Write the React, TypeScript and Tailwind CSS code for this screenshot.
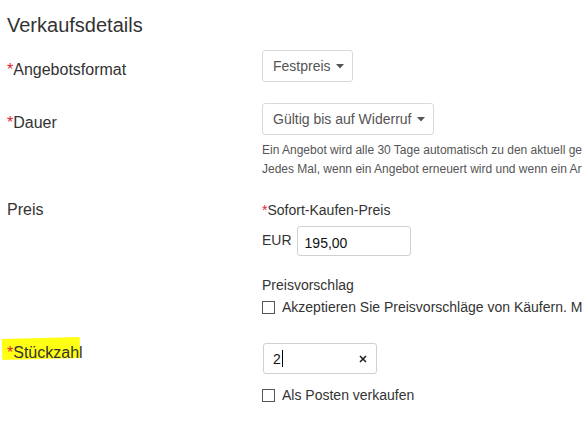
import React from 'react'

// Verkaufsdetails form section — plain flow layout, Arial metrics via Liberation Sans
const font = { fontFamily: '"Liberation Sans", Arial, sans-serif' }

function Star() {
  return <span className="text-[#dd1e31]">*</span>
}

function Caret() {
  return (
    <svg width="8" height="5" viewBox="0 0 8 5" className="ml-[5px] mt-[1px]">
      <path d="M0 0 L8 0 L4 4.5 Z" fill="#555" />
    </svg>
  )
}

function Dropdown({ value }: { value: string }) {
  return (
    <div className="inline-flex h-[32px] items-center rounded-[3px] border border-[#d9d9d9] pl-[10px] pr-[8px] text-[14px] text-[#555]">
      <span>{value}</span>
      <Caret />
    </div>
  )
}

function Box() {
  return <span className="inline-block h-[13px] w-[13px] shrink-0 border border-[#555] bg-white" />
}

function Label({ children, pt }: { children: React.ReactNode; pt: string }) {
  return <div className={`w-[262px] shrink-0 pl-[7px] text-[16px] leading-[20px] text-[#333] ${pt}`}>{children}</div>
}

export default function App() {
  return (
    <div className="h-[427px] w-[582px] overflow-hidden bg-white whitespace-nowrap text-[#333]" style={font}>
      <h2 className="pl-[7px] pt-[13px] text-[20px] leading-[24px] text-[#333]">Verkaufsdetails</h2>

      {/* Angebotsformat */}
      <div className="mt-[13px] flex">
        <Label pt="pt-[10px]">
          <Star />Angebotsformat
        </Label>
        <Dropdown value="Festpreis" />
      </div>

      {/* Dauer */}
      <div className="mt-[21px] flex">
        <Label pt="pt-[10px]">
          <Star />Dauer
        </Label>
        <div className="flex flex-col">
          <div>
            <Dropdown value="Gültig bis auf Widerruf" />
          </div>
          <div className="mt-[6px] text-[12px] leading-[19px] text-[#555]">
            <div>Ein Angebot wird alle 30 Tage automatisch zu den aktuell geltenden Bedingungen erneuert.</div>
            <div>Jedes Mal, wenn ein Angebot erneuert wird und wenn ein Artikel verkauft wird, fallen Gebühren an.</div>
          </div>
        </div>
      </div>

      {/* Preis */}
      <div className="mt-[21px] flex">
        <Label pt="pt-0">Preis</Label>
        <div className="flex flex-col text-[14px] leading-[20px]">
          <div>
            <Star />Sofort-Kaufen-Preis
          </div>
          <div className="mt-[6px] flex items-center">
            <span className="pr-[5px] pb-[2px]">EUR</span>
            <div className="flex h-[30px] w-[114px] items-center rounded-[3px] border border-[#d0d0d0] pl-[7px] pt-[3px] text-[#111]">
              195,00
            </div>
          </div>
          <div className="mt-[19px]">Preisvorschlag</div>
          <div className="mt-[2px] flex items-center gap-[7px]">
            <Box />
            <span>Akzeptieren Sie Preisvorschläge von Käufern. Mit dieser Option können Käufer Ihnen Preise vorschlagen.</span>
          </div>
        </div>
      </div>

      {/* Stückzahl */}
      <div className="mt-[26px] flex">
        <Label pt="pt-0">
          <span className="relative inline-block">
            <span className="absolute left-[-5px] top-[-5px] h-[21px] w-[78px] -rotate-[1.5deg] bg-[#ffff14]" />
            <span className="relative">
              <Star />Stückzahl
            </span>
          </span>
        </Label>
        <div className="flex flex-col text-[14px] leading-[20px]">
          <div className="ml-[1px] flex h-[31px] w-[114px] items-center justify-between rounded-[3px] border border-[#d0d0d0] pl-[9px] pr-[9px] text-[#111]">
            <span className="flex items-center">
              2<span className="ml-[1px] inline-block h-[17px] w-[1px] bg-black" />
            </span>
            <svg width="8" height="8" viewBox="0 0 8 8">
              <path d="M1 1 L7 7 M7 1 L1 7" stroke="#222" strokeWidth="1.6" />
            </svg>
          </div>
          <div className="mt-[11px] flex items-center gap-[7px]">
            <Box />
            <span>Als Posten verkaufen</span>
          </div>
        </div>
      </div>
    </div>
  )
}
